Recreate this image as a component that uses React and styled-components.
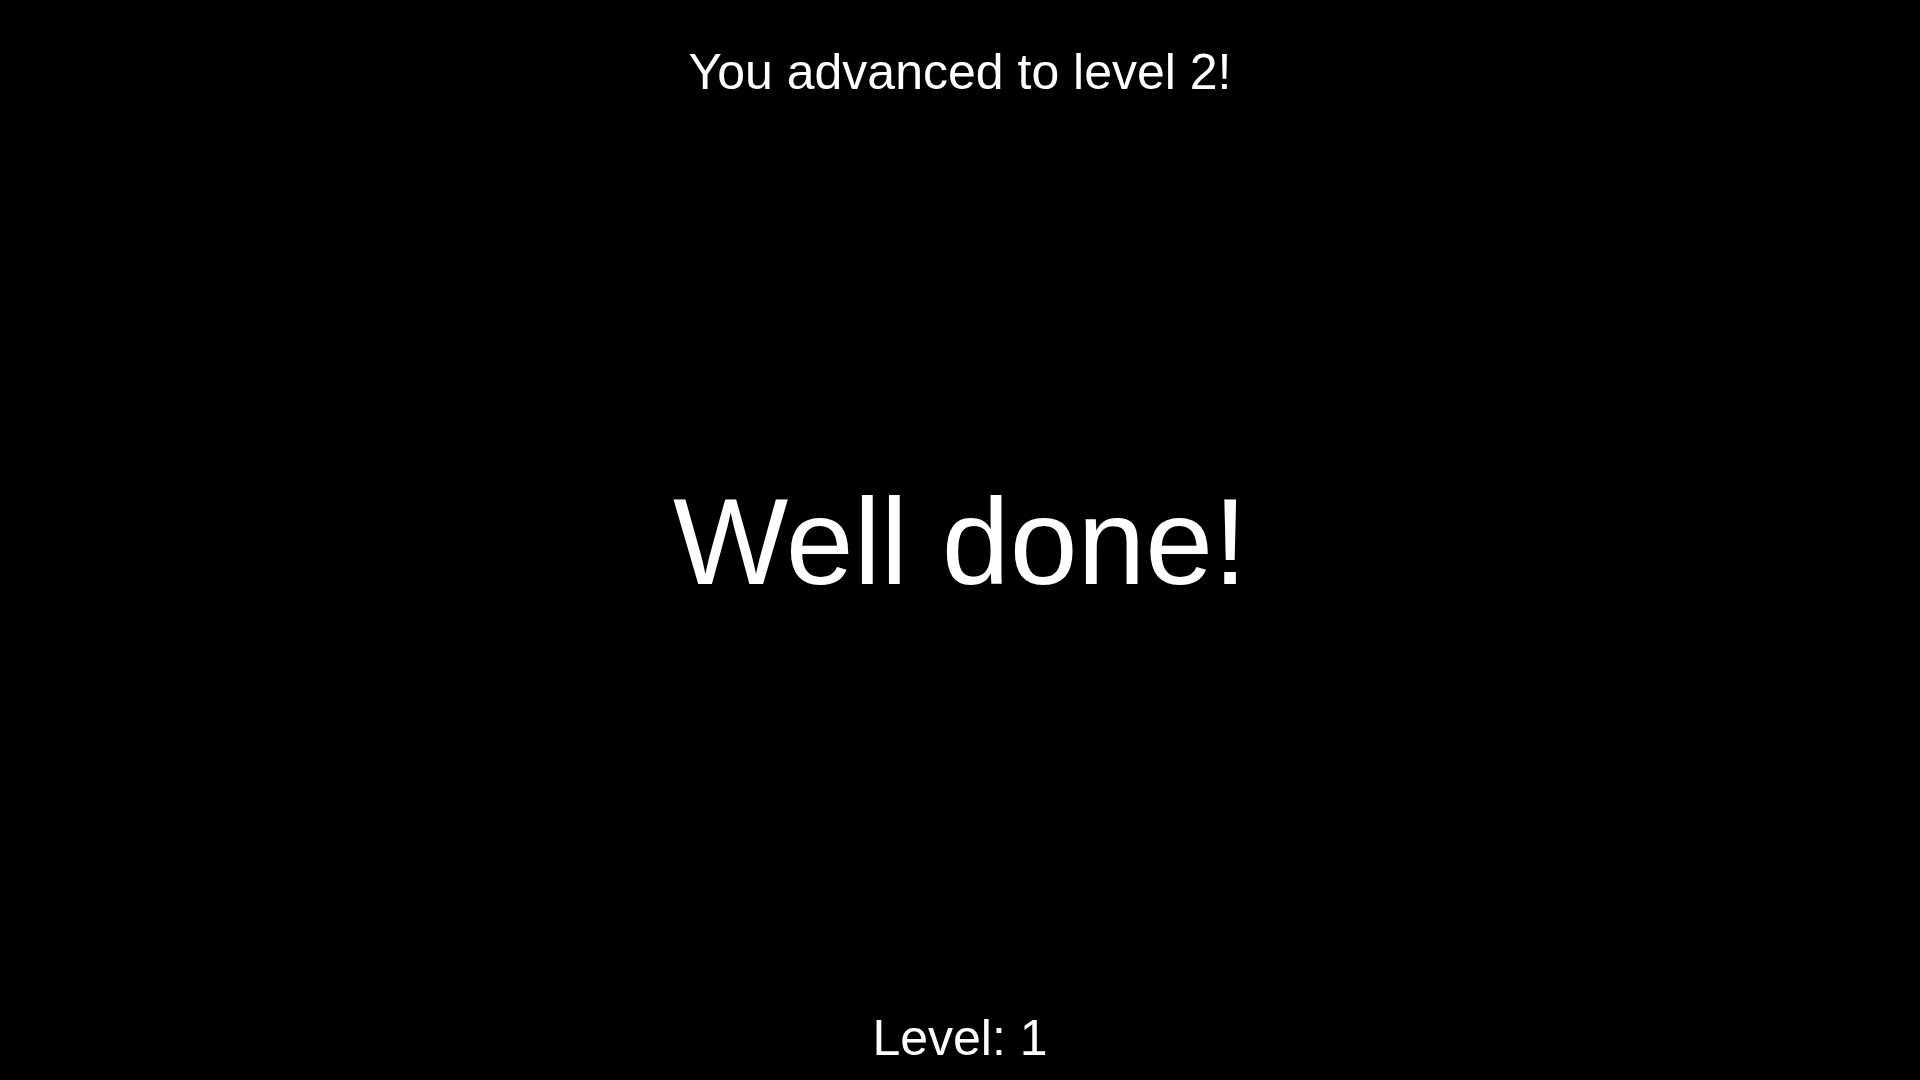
import styled, { createGlobalStyle } from 'styled-components';

const GlobalStyle = createGlobalStyle`
	html, body {
		margin: 0;
		padding: 0;
		background-color: #000;
	}

	body {
		font-family: "Liberation Sans", Arial, sans-serif;
		color: #fff;
	}
`;

const Screen = styled.main`
	display: flex;
	flex-direction: column;
	align-items: center;
	height: 100vh;
	padding: 44px 0 13px;
	box-sizing: border-box;
	background-color: #000;
	overflow: hidden;
`;

const Message = styled.p`
	margin: 0;
	font-size: ${(props) => props.size || 50}px;
	line-height: 1.15;
	text-align: center;
	white-space: nowrap;
`;

const Stage = styled.section`
	display: flex;
	flex: 1;
	align-items: center;
	justify-content: center;
	padding-bottom: 26px;
`;

const App = () => {
	return (
		<>
			<GlobalStyle />
			<Screen>
				<Message>You advanced to level 2!</Message>
				<Stage>
					<Message size={122}>Well done!</Message>
				</Stage>
				<Message>Level: 1</Message>
			</Screen>
		</>
	);
};

export default App;
